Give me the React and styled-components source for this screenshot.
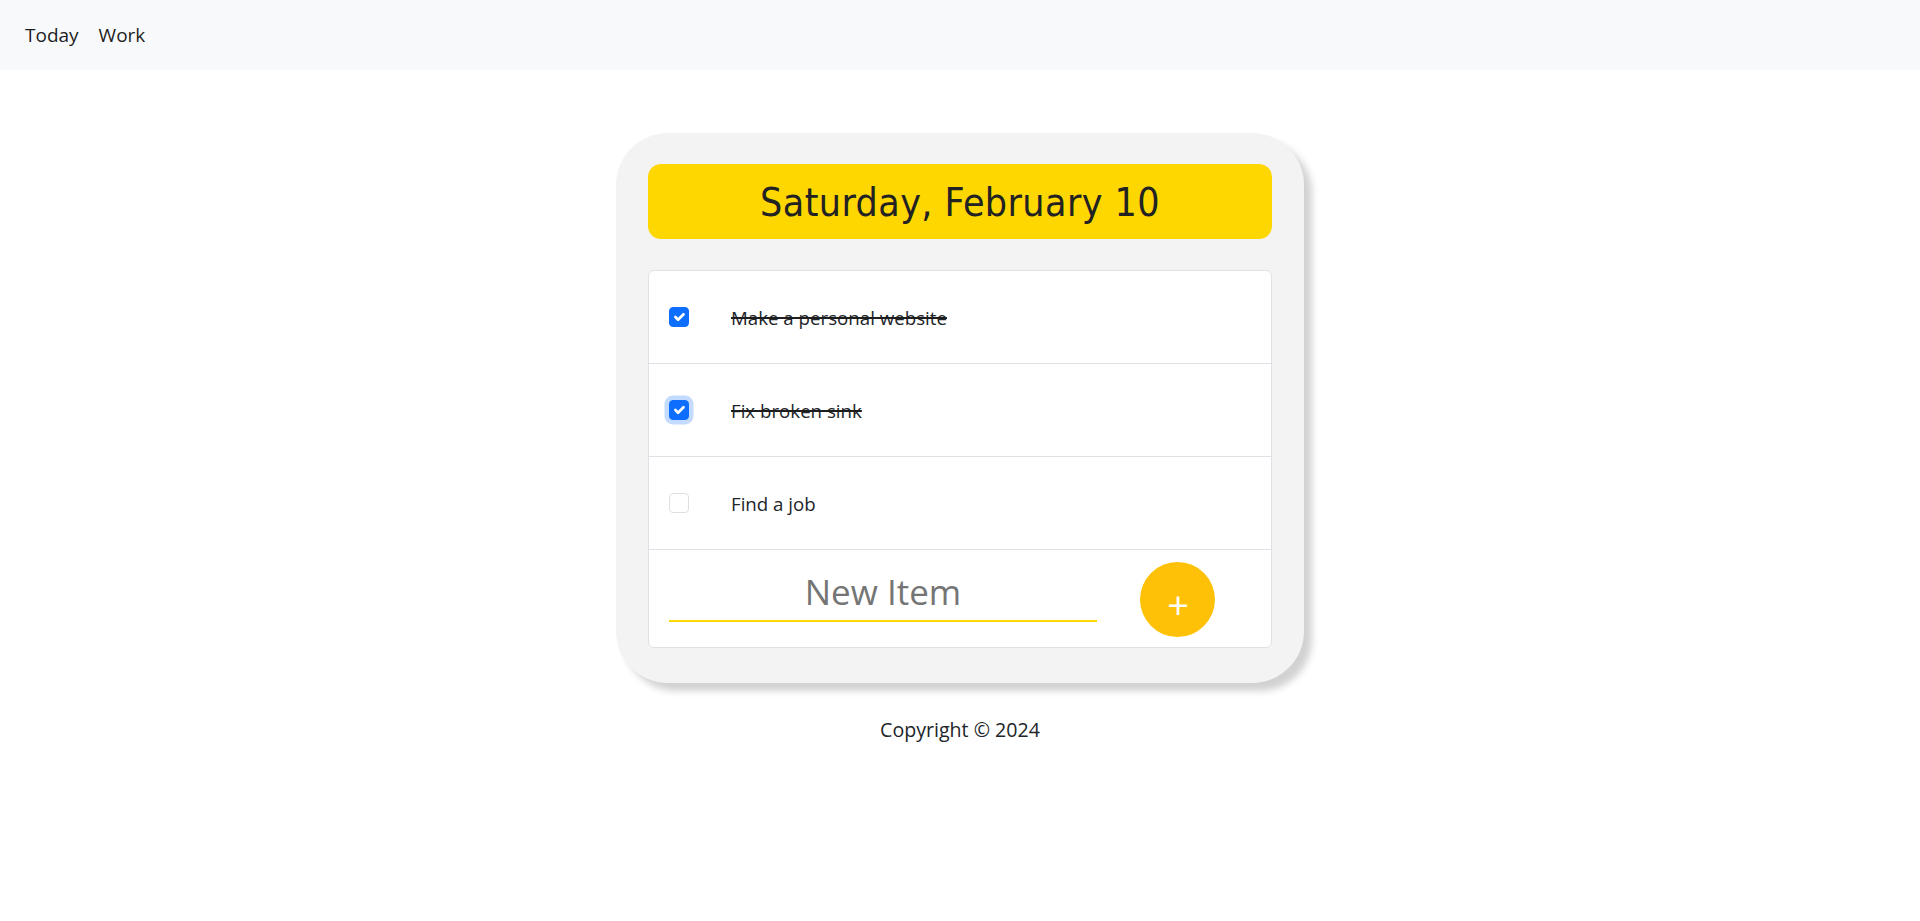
import React from "react";
import styled, { createGlobalStyle } from "styled-components";

const GlobalStyle = createGlobalStyle`
  html, body { margin: 0; padding: 0; background: #ffffff; }
  body {
    font-family: "Open Sans", "Noto Sans", sans-serif;
    color: #212529;
  }
  * { box-sizing: border-box; }
`;

const Navbar = styled.nav`
  height: 70px;
  background: #f8f9fa;
  display: flex;
  align-items: center;
  gap: 20px;
  padding: 0 25px;
`;

const NavLink = styled.a`
  font-size: 19px;
  color: rgba(0, 0, 0, 0.9);
  text-decoration: none;
  line-height: 1;
  margin-top: 1px;
`;

const Main = styled.main`
  display: flex;
  flex-direction: column;
  align-items: center;
  padding-top: 63px;
`;

const Card = styled.section`
  width: 688px;
  background: #f3f3f3;
  border-radius: 52px;
  padding: 31px 32px 35px;
  box-shadow: 8px 8px 7px #d2d2d2;
`;

const Heading = styled.div`
  height: 75px;
  background: #ffd700;
  border-radius: 13px;
  display: flex;
  align-items: center;
  justify-content: center;
`;

const Title = styled.h1`
  margin: 0;
  font-family: "DejaVu Sans Condensed", "Liberation Sans Narrow", "DejaVu Sans", sans-serif;
  font-stretch: condensed;
  font-weight: 400;
  font-size: 39px;
  letter-spacing: 0.4px;
  color: #222222;
  line-height: 1;
  margin-top: 2px;
`;

const List = styled.div`
  margin-top: 31px;
  background: #ffffff;
  border: 1px solid #dee2e6;
  border-radius: 6px;
  overflow: hidden;
`;

const Item = styled.label`
  display: flex;
  align-items: center;
  height: 93px;
  padding: 0 20px;
  border-bottom: 1px solid #dee2e6;
  gap: 42px;
`;

const Box = styled.span`
  width: 20px;
  height: 20px;
  flex: none;
  border-radius: 4px;
  display: flex;
  align-items: center;
  justify-content: center;
  background: ${(p) => (p.$checked ? "#0d6efd" : "#ffffff")};
  border: 1px solid ${(p) => (p.$checked ? "#0d6efd" : "#dcdfe3")};
  box-shadow: ${(p) => (p.$focus ? "0 0 0 4.5px rgba(13, 110, 253, 0.25)" : "none")};
`;

const ItemText = styled.span`
  font-size: 18.7px;
  color: #212529;
  text-decoration: ${(p) => (p.$done ? "line-through" : "none")};
  text-decoration-thickness: 2px;
  text-decoration-color: #1d1d1d;
`;

const Form = styled.form`
  display: flex;
  align-items: flex-start;
  height: 97px;
  padding: 12px 57px 0 20px;
  gap: 43px;
  margin: 0;
`;

const Input = styled.input`
  width: 428px;
  height: 60px;
  border: none;
  border-bottom: 2px solid #ffd700;
  outline: none;
  background: transparent;
  text-align: center;
  font-family: "Open Sans", "Noto Sans", sans-serif;
  font-size: 35px;
  padding: 0;
  color: #212529;
  &::placeholder {
    color: #757575;
    opacity: 1;
  }
`;

const AddButton = styled.button`
  width: 75px;
  height: 75px;
  flex: none;
  border-radius: 50%;
  border: none;
  background: #ffc107;
  color: #ffffff;
  font-family: "Open Sans", "Noto Sans", sans-serif;
  font-size: 38px;
  line-height: 1;
  padding: 8px 0 0 1px;
  display: flex;
  align-items: center;
  justify-content: center;
  cursor: pointer;
`;

const Footer = styled.footer`
  margin-top: 32px;
  font-size: 19.6px;
  line-height: 1.5;
  color: #212529;
`;

const Check = () => (
  <svg width="20" height="20" viewBox="0 0 20 20" aria-hidden="true">
    <path d="m6 10 3 3 6-6" fill="none" stroke="#fff" strokeWidth="3" strokeLinecap="round" strokeLinejoin="round" />
  </svg>
);

const items = [
  { text: "Make a personal website", done: true, focus: false },
  { text: "Fix broken sink", done: true, focus: true },
  { text: "Find a job", done: false, focus: false },
];

export default function App() {
  return (
    <>
      <GlobalStyle />
      <Navbar>
        <NavLink href="#">Today</NavLink>
        <NavLink href="#">Work</NavLink>
      </Navbar>
      <Main>
        <Card>
          <Heading>
            <Title>Saturday, February 10</Title>
          </Heading>
          <List>
            {items.map((it) => (
              <Item key={it.text}>
                <Box $checked={it.done} $focus={it.focus}>
                  {it.done && <Check />}
                </Box>
                <ItemText $done={it.done}>{it.text}</ItemText>
              </Item>
            ))}
            <Form onSubmit={(e) => e.preventDefault()}>
              <Input placeholder="New Item" />
              <AddButton type="submit">+</AddButton>
            </Form>
          </List>
        </Card>
        <Footer>Copyright © 2024</Footer>
      </Main>
    </>
  );
}
